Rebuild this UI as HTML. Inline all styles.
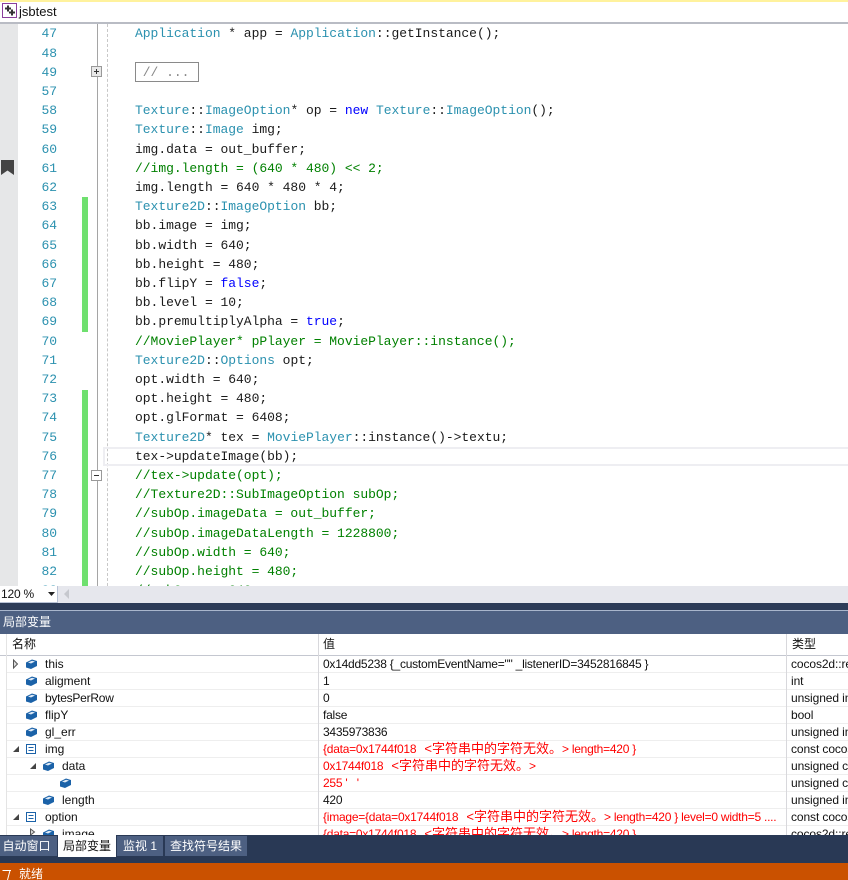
<!DOCTYPE html>
<html><head><meta charset="utf-8"><style>
html,body{margin:0;padding:0;width:848px;height:880px;overflow:hidden;background:#fff}
body{position:relative;font:12px "Liberation Sans","Noto Sans CJK SC",sans-serif;color:#111}
div,pre,svg{position:absolute}
pre{margin:0;font:13px/19.2px "Liberation Mono","Noto Sans CJK SC",monospace;letter-spacing:-.03px;color:#1a1a1a}
.t{color:#2b91af}.c{color:#008000}.k{color:#0000ff}
.g{left:82px;width:6px;background:#6fe06f}
.l{left:7px;width:841px;height:17px;line-height:16px;white-space:nowrap;border-bottom:1px solid #eeeeee;box-sizing:border-box}
.l span{position:absolute;top:0;white-space:pre}
.l span.v{left:316px;letter-spacing:-.24px}.l span.y{left:784px;letter-spacing:-.1px}.l span.r{color:#f00}
.l span b{position:static;font-weight:400;font-size:13px;letter-spacing:0;margin-left:5px}
.tb{top:836px;height:20px;line-height:20px;text-align:center;font-size:12px;color:#fff;background:#4d6082}
</style></head><body>
<div style="left:0;top:0;width:848px;height:2px;background:#fff29d"></div>
<div style="left:0;top:22px;width:848px;height:2px;background:#b9bcc4"></div>
<svg style="left:2px;top:3px" width="15" height="15" viewBox="0 0 15 15"><rect x=".5" y=".5" width="14" height="14" fill="#fff" stroke="#8a3f9c"/><path d="M5 2.500h2v2h2v2H7v2H5v-2H3v-2h2zM9 6.500h2v2h2v2h-2v2H9v-2H7v-2h2z" fill="#333"/></svg>
<div style="left:19px;top:3px;font-size:13px;line-height:18px;color:#111">jsbtest</div>

<div style="left:0;top:24px;width:18px;height:562px;background:#e6e7e8"></div>
<svg style="left:1px;top:160px" width="13" height="15" viewBox="0 0 13 15"><path d="M0 0h13v15L6.500 10.500 0 15z" fill="#444"/></svg>
<div class="g" style="top:197px;height:135px"></div>
<div class="g" style="top:390px;height:196px"></div>
<div style="left:97px;top:24px;width:1px;height:562px;background:#a5a5a5"></div>
<div style="left:107px;top:24px;height:562px;border-left:1px dashed #c8c8c8"></div>
<svg style="left:91px;top:66px" width="11" height="11"><rect x=".5" y=".5" width="10" height="10" fill="#e8e8e8" stroke="#999"/><path d="M3 5.500h5M5.500 3v5" stroke="#333"/></svg>
<svg style="left:91px;top:470px" width="11" height="11"><rect x=".5" y=".5" width="10" height="10" fill="#fff" stroke="#999"/><path d="M3 5.500h5" stroke="#333"/></svg>
<div style="left:103px;top:447px;width:745px;height:15px;border:2px solid #eeeef2"></div>
<div style="left:135px;top:62px;width:62px;height:18px;border:1px solid #8a8a8a"></div>

<div style="left:0;top:24px;width:848px;height:562px;overflow:hidden">
<pre style="left:22px;top:.4px;width:35px;text-align:right;color:#2b91af">47
48
49
57
58
59
60
61
62
63
64
65
66
67
68
69
70
71
72
73
74
75
76
77
78
79
80
81
82
83</pre>
<pre style="left:135px;top:.4px"><span class="t">Application</span> * app = <span class="t">Application</span>::getInstance();

<span style="color:#888"> // ...</span>

<span class="t">Texture</span>::<span class="t">ImageOption</span>* op = <span class="k">new</span> <span class="t">Texture</span>::<span class="t">ImageOption</span>();
<span class="t">Texture</span>::<span class="t">Image</span> img;
img.data = out_buffer;
<span class="c">//img.length = (640 * 480) &lt;&lt; 2;</span>
img.length = 640 * 480 * 4;
<span class="t">Texture2D</span>::<span class="t">ImageOption</span> bb;
bb.image = img;
bb.width = 640;
bb.height = 480;
bb.flipY = <span class="k">false</span>;
bb.level = 10;
bb.premultiplyAlpha = <span class="k">true</span>;
<span class="c">//MoviePlayer* pPlayer = MoviePlayer::instance();</span>
<span class="t">Texture2D</span>::<span class="t">Options</span> opt;
opt.width = 640;
opt.height = 480;
opt.glFormat = 6408;
<span class="t">Texture2D</span>* tex = <span class="t">MoviePlayer</span>::instance()-&gt;textu;
tex-&gt;updateImage(bb);
<span class="c">//tex-&gt;update(opt);</span>
<span class="c">//Texture2D::SubImageOption subOp;</span>
<span class="c">//subOp.imageData = out_buffer;</span>
<span class="c">//subOp.imageDataLength = 1228800;</span>
<span class="c">//subOp.width = 640;</span>
<span class="c">//subOp.height = 480;</span>
<span class="c">//subOp.x = 640;</span></pre>
</div>

<div style="left:0;top:586px;width:848px;height:17px;background:#e6e7ed"></div>
<div style="left:0;top:586px;width:56px;height:16px;padding-left:1px;background:#fff;border-right:1px solid #b9c3d6;border-bottom:1px solid #b9c3d6;line-height:16px;font-size:12px;letter-spacing:-.2px">120 %</div>
<svg style="left:47px;top:592px" width="9" height="5"><path d="M1 0h7L4.500 4z" fill="#222"/></svg>
<svg style="left:63px;top:589px" width="7" height="11"><path d="M6 0v10L1 5z" fill="#c6c8ce"/></svg>

<div style="left:0;top:603px;width:848px;height:7px;background:#2d3c58"></div>
<div style="left:0;top:610px;width:848px;height:1px;background:#a9b6cc"></div>
<div style="left:0;top:611px;width:845px;height:23px;background:#4d6082;color:#fff;line-height:23px;font-size:12px;padding-left:3px">局部变量</div>

<div style="left:0;top:634px;width:848px;height:22px;background:#fff;border-bottom:1px solid #c4c7d0;box-sizing:border-box;line-height:21px;font-size:12px">
<div style="left:12px;top:0">名称</div><div style="left:323px;top:0">值</div><div style="left:792px;top:0">类型</div></div>

<div class="l" style="top:656px"><span style="left:38px">this</span><span class="v">0x14dd5238 {_customEventName="" _listenerID=3452816845 }</span><span class="y">cocos2d::renderer</span></div>
<div class="l" style="top:673px"><span style="left:38px">aligment</span><span class="v">1</span><span class="y">int</span></div>
<div class="l" style="top:690px"><span style="left:38px;letter-spacing:-.25px">bytesPerRow</span><span class="v">0</span><span class="y">unsigned int</span></div>
<div class="l" style="top:707px"><span style="left:38px">flipY</span><span class="v">false</span><span class="y">bool</span></div>
<div class="l" style="top:724px"><span style="left:38px">gl_err</span><span class="v">3435973836</span><span class="y">unsigned int</span></div>
<div class="l" style="top:741px"><span style="left:38px">img</span><span class="v r">{data=0x1744f018 <b>&lt;字符串中的字符无效。</b>&gt; length=420 }</span><span class="y">const cocos2d::</span></div>
<div class="l" style="top:758px"><span style="left:55px">data</span><span class="v r">0x1744f018 <b>&lt;字符串中的字符无效。</b>&gt;</span><span class="y">unsigned char</span></div>
<div class="l" style="top:775px"><span class="v r">255 '   '</span><span class="y">unsigned char</span></div>
<div class="l" style="top:792px"><span style="left:55px">length</span><span class="v">420</span><span class="y">unsigned int</span></div>
<div class="l" style="top:809px"><span style="left:38px">option</span><span class="v r">{image={data=0x1744f018 <b>&lt;字符串中的字符无效。</b>&gt; length=420 } level=0 width=5 ....</span><span class="y">const cocos2d::</span></div>
<div class="l" style="top:826px;height:9px;overflow:hidden;border:0"><span style="left:55px">image</span><span class="v r">{data=0x1744f018 <b>&lt;字符串中的字符无效。</b>&gt; length=420 }</span><span class="y">cocos2d::render</span></div>

<div style="left:6px;top:634px;width:1px;height:201px;background:#e4e4e4"></div>
<div style="left:318px;top:634px;width:1px;height:201px;background:#d8d8dc"></div>
<div style="left:786px;top:634px;width:1px;height:201px;background:#d8d8dc"></div>

<svg style="left:0;top:656px" width="72" height="179" viewBox="0 0 72 179">
<defs><g id="b"><path d="M0 3.500 6 .5l5 1.500v5L5 10 0 8.500z" fill="#1b62a8"/><path d="M2 3.500 6 1.800 9 2.500 5 4.500z" fill="#dfeaf6"/></g>
<g id="m"><rect x=".5" y=".5" width="9" height="9" fill="#fff" stroke="#1b62a8"/><path d="M2.500 3.500h5M2.500 6.500h5" stroke="#1b62a8"/></g>
<path id="o" d="M7 0v6H1z" fill="#444"/></defs>
<path d="M13.500 4v8l4-4z" fill="#ddd" stroke="#555"/>
<use href="#b" x="26" y="3"/><use href="#b" x="26" y="20"/><use href="#b" x="26" y="37"/><use href="#b" x="26" y="54"/><use href="#b" x="26" y="71"/>
<use href="#o" x="12" y="90"/><use href="#m" x="26" y="88"/>
<use href="#o" x="29" y="107"/><use href="#b" x="43" y="105"/>
<use href="#b" x="60" y="122"/><use href="#b" x="43" y="139"/>
<use href="#o" x="12" y="158"/><use href="#m" x="26" y="156"/>
<path d="M30.500 173v6l4-3z" fill="#ddd" stroke="#555"/><use href="#b" x="43" y="173"/>
</svg>

<div style="left:0;top:835px;width:848px;height:28px;background:#293955"></div>
<div class="tb" style="left:0;width:53px;padding-right:4px">自动窗口</div>
<div class="tb" style="left:58px;width:58px;background:#fff;color:#111;top:835px;height:22px;line-height:22px">局部变量</div>
<div class="tb" style="left:117px;width:46px">监视 1</div>
<div class="tb" style="left:165px;width:82px">查找符号结果</div>

<div style="left:0;top:863px;width:848px;height:17px;background:#ca5100;color:#fff;line-height:22px;font-size:12px"><span style="position:absolute;left:19px">就绪</span></div>
<svg style="left:2px;top:869px" width="10" height="11"><path d="M.5 1.500h8.500M8 1.500 5.500 11" stroke="#fff" fill="none"/></svg>
</body></html>
